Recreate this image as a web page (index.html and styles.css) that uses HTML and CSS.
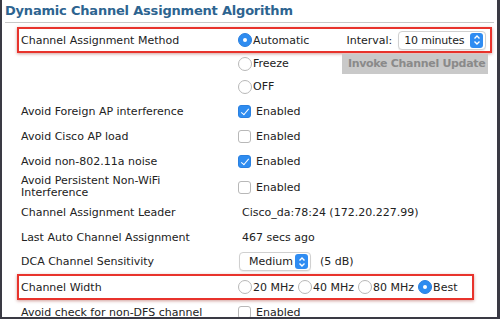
FILE: index.html
```html
<!DOCTYPE html>
<html>
<head>
<meta charset="utf-8">
<link rel="stylesheet" href="styles.css">
</head>
<body>
<div class="frame">
  <h1 class="title">Dynamic Channel Assignment Algorithm</h1>
  <div class="rows">
    <div class="row boxed box-wide">
      <div class="label">Channel Assignment Method</div>
      <div class="value">
        <span class="opt"><span class="radio on"></span>Automatic</span>
        <span class="interval">Interval:</span>
        <span class="select sel-interval">10 minutes<span class="spin"><svg viewBox="0 0 10 12" width="10" height="12"><path d="M2.5 4.5 L5 2 L7.5 4.5 M2.5 7.5 L5 10 L7.5 7.5" fill="none" stroke="#fff" stroke-width="1.4"/></svg></span></span>
      </div>
    </div>
    <div class="row short">
      <div class="label"></div>
      <div class="value">
        <span class="opt"><span class="radio"></span>Freeze</span>
        <span class="btn">Invoke Channel Update</span>
      </div>
    </div>
    <div class="row">
      <div class="label"></div>
      <div class="value"><span class="opt"><span class="radio"></span>OFF</span></div>
    </div>
    <div class="row">
      <div class="label">Avoid Foreign AP interference</div>
      <div class="value"><span class="check on"></span>Enabled</div>
    </div>
    <div class="row">
      <div class="label">Avoid Cisco AP load</div>
      <div class="value"><span class="check"></span>Enabled</div>
    </div>
    <div class="row">
      <div class="label">Avoid non-802.11a noise</div>
      <div class="value"><span class="check on"></span>Enabled</div>
    </div>
    <div class="row tall">
      <div class="label two">Avoid Persistent Non-WiFi<br>Interference</div>
      <div class="value"><span class="check"></span>Enabled</div>
    </div>
    <div class="row">
      <div class="label">Channel Assignment Leader</div>
      <div class="value text">Cisco_da:78:24 (172.20.227.99)</div>
    </div>
    <div class="row mid">
      <div class="label">Last Auto Channel Assignment</div>
      <div class="value text">467 secs ago</div>
    </div>
    <div class="row">
      <div class="label">DCA Channel Sensitivity</div>
      <div class="value">
        <span class="select sel-medium">Medium<span class="spin"><svg viewBox="0 0 10 12" width="10" height="12"><path d="M2.5 4.5 L5 2 L7.5 4.5 M2.5 7.5 L5 10 L7.5 7.5" fill="none" stroke="#fff" stroke-width="1.4"/></svg></span></span>
        <span class="db">(5 dB)</span>
      </div>
    </div>
    <div class="row boxed box-narrow">
      <div class="label">Channel Width</div>
      <div class="value widths">
        <span class="opt"><span class="radio"></span>20 MHz</span>
        <span class="opt"><span class="radio"></span>40 MHz</span>
        <span class="opt"><span class="radio"></span>80 MHz</span>
        <span class="opt"><span class="radio on"></span>Best</span>
      </div>
    </div>
    <div class="row last">
      <div class="label">Avoid check for non-DFS channel</div>
      <div class="value"><span class="check"></span>Enabled</div>
    </div>
  </div>
</div>
</body>
</html>
```

FILE: styles.css
```css
* { box-sizing: border-box; }
html, body { margin: 0; padding: 0; background: #fff; }
body {
  width: 500px;
  height: 319px;
  overflow: hidden;
  font-family: "DejaVu Sans", Verdana, sans-serif;
  font-size: 11px;
  color: #222;
}
.frame {
  width: 500px;
  height: 319px;
  border-left: 2px solid #3a3a44;
  border-right: 3px solid #3a3a44;
  border-bottom: 2px solid #3a3a44;
  overflow: hidden;
}
.title {
  margin: 0 3px;
  height: 23px;
  padding: 2px 0 0 0;
  font-size: 13px;
  font-weight: bold;
  letter-spacing: -0.2px;
  color: #2d6490;
  border-bottom: 1px solid #c8c8c8;
  line-height: 18px;
}
.rows {
  padding-top: 4px;
}
.row {
  display: grid;
  grid-template-columns: 217px 1fr;
  align-items: center;
  height: 25px;
  padding-left: 19px;
}
.row.short { height: 21px; }
.row.tall { height: 26px; }
.row.mid { height: 24px; }
.row.boxed {
  height: 26px;
  border: 2px solid #e8332c;
  box-shadow: 0 1px 3px rgba(150, 40, 30, 0.45);
  margin-left: 15px;
  padding-left: 2px;
}
.box-wide { width: 475px; }
.box-narrow { width: 457px; }
.label { white-space: nowrap; }
.label.two { line-height: 12px; }
.value {
  display: flex;
  align-items: center;
  white-space: nowrap;
}
.opt { display: inline-flex; align-items: center; }
.radio {
  width: 14px;
  height: 14px;
  border-radius: 50%;
  border: 1px solid #b8b8b8;
  background: #fff;
  margin-right: 1px;
  position: relative;
  flex: none;
}
.radio.on {
  background: #2e8cf0;
  border-color: #2a80e0;
}
.radio.on::after {
  content: "";
  position: absolute;
  left: 4px;
  top: 4px;
  width: 4px;
  height: 4px;
  border-radius: 50%;
  background: #fff;
}
.check {
  width: 13px;
  height: 13px;
  border-radius: 3px;
  border: 1px solid #b8b8b8;
  background: #fff;
  margin-right: 5px;
  position: relative;
  flex: none;
}
.check.on { background: #2e8cf0; border-color: #2a80e0; }
.check.on::after {
  content: "";
  position: absolute;
  left: 3.5px;
  top: 1px;
  width: 3px;
  height: 7px;
  border: solid #fff;
  border-width: 0 1.6px 1.6px 0;
  transform: rotate(40deg);
}
.interval { margin-left: 37px; }
.select {
  display: inline-flex;
  align-items: center;
  justify-content: space-between;
  height: 19px;
  border: 1px solid #d0d0d0;
  border-radius: 4px;
  background: #fff;
  padding: 0 2px 0 9px;
  box-shadow: 0 1px 1px rgba(0,0,0,0.08);
}
.sel-interval {
  width: 88px;
  margin-left: 6px;
  padding-left: 5px;
  letter-spacing: -0.2px;
}
.sel-medium { width: 72px; margin-left: 1px; }
.spin {
  width: 13px;
  height: 15px;
  border-radius: 3px;
  background: #2f8cf2;
  display: inline-flex;
  align-items: center;
  justify-content: center;
}
.btn {
  margin-left: 53px;
  height: 20px;
  width: 146px;
  background: #c9c9c9;
  color: #8a8a8a;
  font-weight: bold;
  letter-spacing: -0.3px;
  display: inline-flex;
  align-items: center;
  padding-left: 6px;
  overflow: hidden;
}
.db { margin-left: 9px; }
.widths .opt { margin-right: 4px; }
.text { padding-left: 4px; }
```
